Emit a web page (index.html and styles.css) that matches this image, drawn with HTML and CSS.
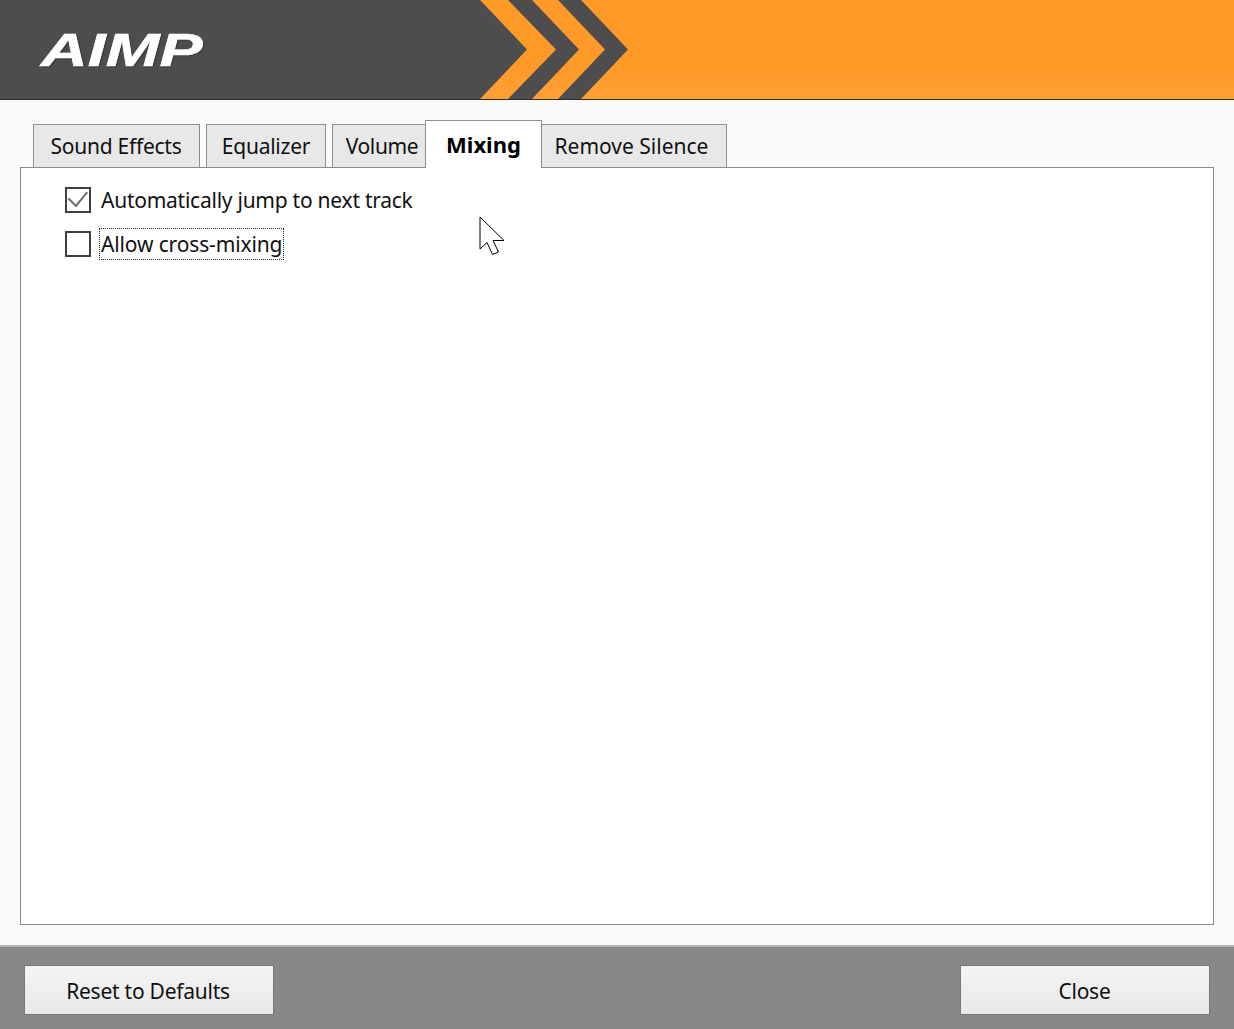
FILE: index.html
```html
<!DOCTYPE html>
<html lang="en">
<head>
<meta charset="utf-8">
<title>AIMP</title>
<link rel="stylesheet" href="styles.css">
</head>
<body>
<div class="window">
  <header class="header">
    <svg class="banner" width="1234" height="99" viewBox="0 0 1234 99" aria-hidden="true">
      <defs>
        <linearGradient id="orange" x1="0" y1="0" x2="0" y2="1">
          <stop offset="0" stop-color="#ff9a29"/>
          <stop offset="0.7" stop-color="#ff9a29"/>
          <stop offset="1" stop-color="#ffa035"/>
        </linearGradient>
      </defs>
      <rect width="1234" height="99" fill="url(#orange)"/>
      <path d="M0 0H480L527 49.5L480 99H0Z" fill="#4d4d4d"/>
      <path d="M508 0H532L579 49.5L532 99H508L556 49.5Z" fill="#4d4d4d"/>
      <path d="M558 0H581L628 49.5L581 99H558L605 49.5Z" fill="#4d4d4d"/>
    </svg>
    <div class="logo">AIMP</div>
  </header>
  <main class="main">
    <nav class="tabs">
      <div class="tab tab-sound">Sound Effects</div>
      <div class="tab tab-eq">Equalizer</div>
      <div class="tab tab-volume">Volume</div>
      <div class="tab tab-active">Mixing</div>
      <div class="tab tab-silence">Remove Silence</div>
    </nav>
    <section class="panel">
      <div class="row">
        <span class="check">
          <svg width="22" height="22" viewBox="0 0 22 22" aria-hidden="true"><path d="M1.3 9.3L9 17L20.3 3.2" fill="none" stroke="#707070" stroke-width="2"/></svg>
        </span>
        <span class="label">Automatically jump to next track</span>
      </div>
      <div class="row">
        <span class="check"></span>
        <span class="label label-focus">Allow cross-mixing</span>
      </div>
    </section>
    <svg class="cursor" width="26" height="40" viewBox="0 0 26 40" aria-hidden="true">
      <path d="M1 1V33L8 26.5L13.5 38.5L19.5 36L14 24.5H25Z" fill="#fff" stroke="#000" stroke-width="1" stroke-linejoin="miter"/>
    </svg>
  </main>
  <footer class="footer">
    <div class="button button-reset">Reset to Defaults</div>
    <div class="button">Close</div>
  </footer>
</div>
</body>
</html>
```
FILE: styles.css
```css
* { box-sizing: border-box; }
html, body { margin: 0; padding: 0; }
body {
  width: 1234px;
  height: 1029px;
  overflow: hidden;
  font-family: "Noto Sans", "Open Sans", sans-serif;
  font-size: 21px;
  letter-spacing: -0.25px;
  color: #111;
  background: #fafafa;
}
.window { display: flex; flex-direction: column; height: 1029px; }
.header {
  position: relative;
  height: 100px;
  flex: none;
  border-bottom: 1px solid #2e2e2e;
}
.banner { display: block; }
.logo {
  position: absolute;
  left: 41px;
  top: 23px;
  font-family: "Liberation Sans", Arial, sans-serif;
  font-style: italic;
  font-weight: 700;
  font-size: 47px;
  line-height: 54px;
  letter-spacing: 0;
  color: #fff;
  text-shadow: 1px 1px 1px #2f2f2f;
  transform: scaleX(1.375);
  transform-origin: left center;
  -webkit-text-stroke: 0.6px #fff;
}
.main {
  position: relative;
  flex: 1;
  display: flex;
  flex-direction: column;
  padding: 20px 20px 20px;
  background: #fafafa;
}
.tabs {
  display: flex;
  align-items: flex-end;
  height: 48px;
  margin-bottom: -1px;
  padding-left: 13px;
  flex: none;
}
.tab {
  height: 44px;
  display: flex;
  align-items: center;
  justify-content: center;
  padding-bottom: 1px;
  background: #e8e8e8;
  border: 1px solid #8f8f8f;
  border-bottom: none;
  margin-right: 6px;
}
.tab-sound { width: 167px; padding-right: 1px; }
.tab-eq { width: 120px; }
.tab-volume { width: 99px; margin-right: -6px; padding-left: 1px; letter-spacing: -0.35px; }
.tab-active {
  position: relative;
  z-index: 2;
  width: 117px;
  height: 48px;
  margin-right: -1px;
  padding-bottom: 2px;
  background: #fff;
  font-weight: 700;
  font-size: 22px;
  letter-spacing: 0;
  color: #000;
}
.tab-silence { width: 186px; margin-right: 0; padding-right: 5px; letter-spacing: 0; }
.panel {
  position: relative;
  z-index: 1;
  flex: 1;
  background: #fff;
  border: 1px solid #8a8a8a;
  padding: 19px 44px;
  display: flex;
  flex-direction: column;
  gap: 18px;
}
.row { display: flex; align-items: center; height: 26px; }
.check {
  width: 26px;
  height: 26px;
  flex: none;
  border: 2px solid #404040;
  background: #fff;
  display: block;
}
.check svg { display: block; }
.label {
  margin-left: 8px;
  padding: 1px;
  border: 1px dotted transparent;
  line-height: 28px;
  white-space: nowrap;
}
.label-focus { border-color: #222; letter-spacing: -0.14px; }
.cursor {
  position: absolute;
  left: 479px;
  top: 116px;
  z-index: 3;
}
.footer {
  flex: none;
  height: 84px;
  border-top: 2px solid #b4b4b4;
  background: #888;
  display: flex;
  justify-content: space-between;
  align-items: flex-start;
  padding: 18px 24px 0;
}
.button {
  width: 250px;
  height: 50px;
  display: flex;
  align-items: center;
  justify-content: center;
  padding-top: 2px;
  padding-right: 1px;
  border: 1px solid #777;
  background: linear-gradient(#f3f3f3, #e9e9e9);
}
.button-reset { padding-right: 2px; }
```
